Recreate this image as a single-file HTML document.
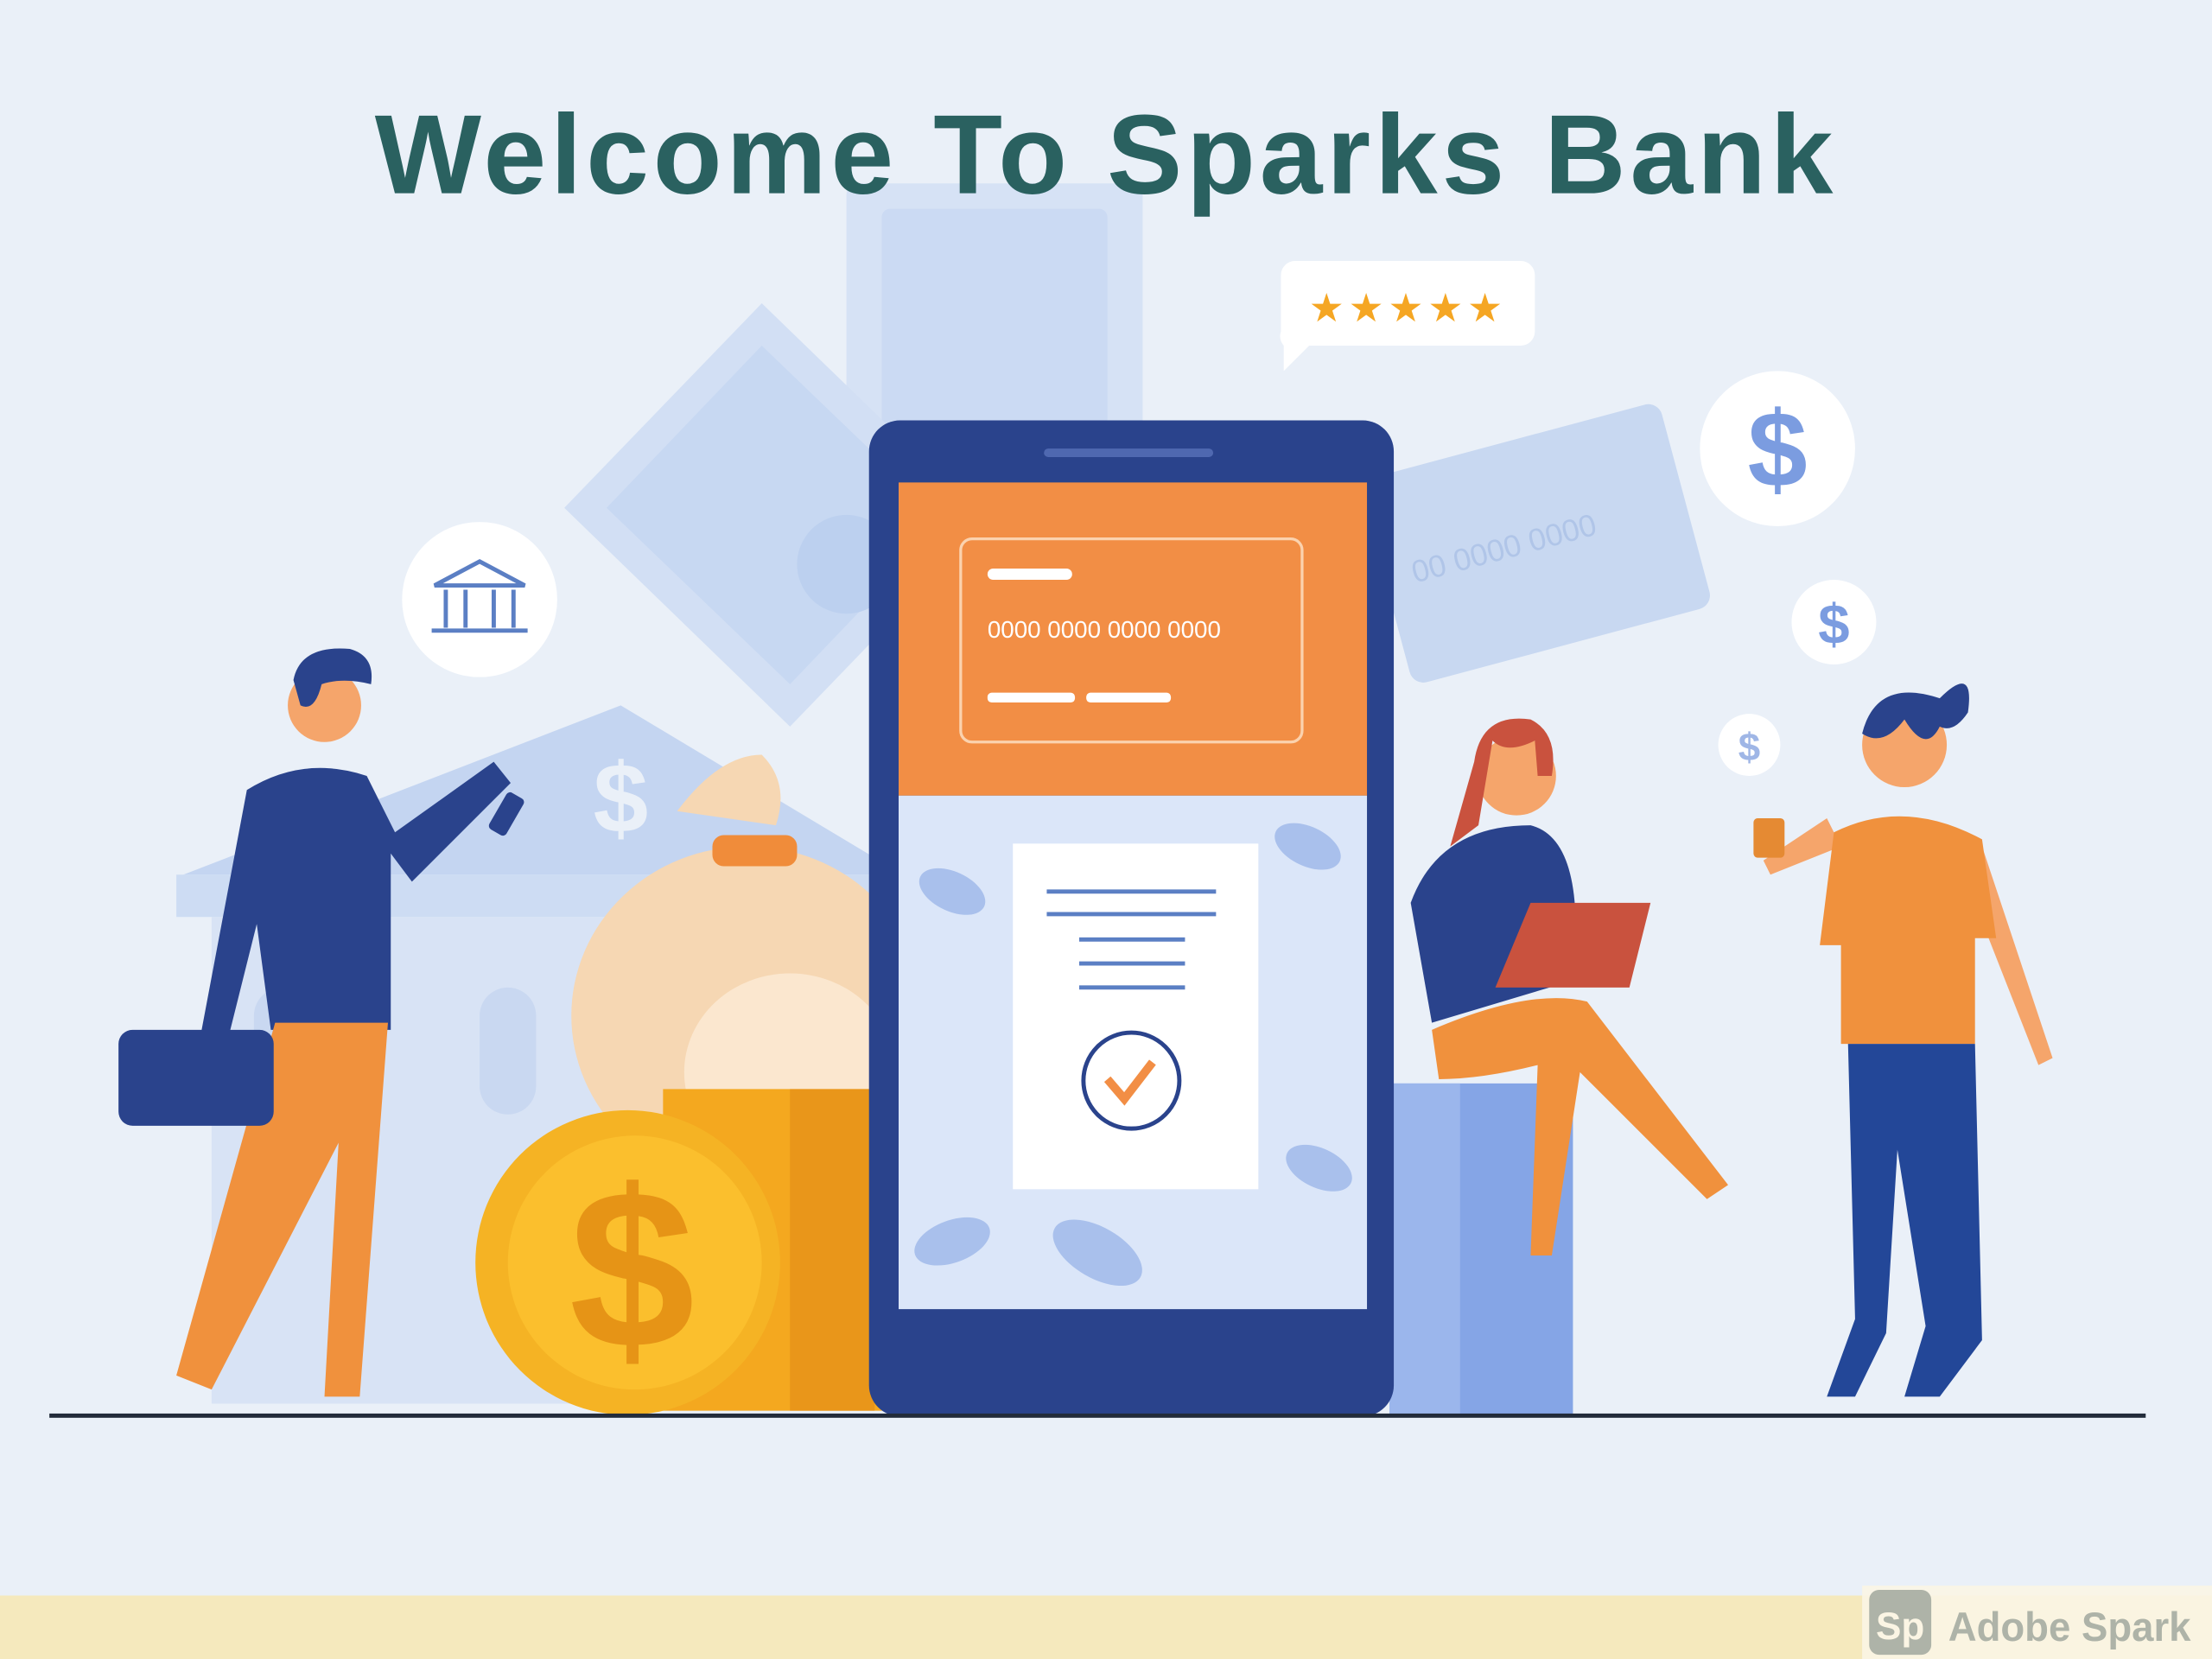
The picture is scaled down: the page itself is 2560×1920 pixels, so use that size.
<!DOCTYPE html>
<html><head><meta charset="utf-8"><style>
html,body{margin:0;padding:0;width:2560px;height:1920px;overflow:hidden;background:#eaf0f8}
svg{display:block}
</style></head><body>
<svg width="2560" height="1920" viewBox="0 0 1568 1176" xmlns="http://www.w3.org/2000/svg">
<rect width="1568" height="1176" fill="#eaf0f8"/>
<rect x="600" y="130" width="210" height="200" rx="8" fill="#d6e2f5"/>
<rect x="625" y="148" width="160" height="170" rx="6" fill="#cbdaf3"/>
<polygon points="400,360 540,215 700,370 560,515" fill="#d2dff4"/>
<polygon points="430,360 540,245 670,370 560,485" fill="#c7d8f2"/>
<circle cx="600" cy="400" r="35" fill="#bcd0ef"/>
<g transform="rotate(-15 1090 390)"><rect x="980" y="310" width="220" height="150" rx="10" fill="#c8d8f1"/><text x="1000" y="390" font-family="Liberation Sans" font-size="22" fill="#b0c5e8">00 0000 0000</text></g>
<polygon points="130,620 440,500 640,620" fill="#c4d5f1"/>
<rect x="125" y="620" width="500" height="30" fill="#cddcf3"/>
<rect x="150" y="650" width="460" height="345" fill="#d8e3f5"/>
<rect x="180" y="700" width="40" height="90" rx="20" fill="#c9d8f1"/>
<rect x="340" y="700" width="40" height="90" rx="20" fill="#c9d8f1"/>
<text x="440" y="590" font-family="Liberation Sans" font-weight="bold" font-size="70" fill="#eaf0f8" text-anchor="middle">$</text>
<circle cx="340" cy="425" r="55" fill="#fff"/>
<g stroke="#5b7fc4" stroke-width="3" fill="none"><polygon points="308,415 340,398 372,415"/><line x1="316" y1="418" x2="316" y2="445"/><line x1="330" y1="418" x2="330" y2="445"/><line x1="350" y1="418" x2="350" y2="445"/><line x1="364" y1="418" x2="364" y2="445"/><line x1="306" y1="447" x2="374" y2="447"/></g>
<path d="M918,185 h160 a10,10 0 0 1 10,10 v40 a10,10 0 0 1 -10,10 h-150 l-18,18 v-18 a10,10 0 0 1 -2,-10 v-40 a10,10 0 0 1 10,-10z" fill="#fff"/>
<text x="998" y="228" font-family="DejaVu Sans" font-size="28" fill="#f5a623" text-anchor="middle" letter-spacing="3">★★★★★</text>
<circle cx="1260" cy="318" r="55" fill="#fff"/>
<text x="1260" y="345" font-family="Liberation Sans" font-weight="bold" font-size="76" fill="#7b9ce0" text-anchor="middle">$</text>
<circle cx="1300" cy="441" r="30" fill="#fff"/>
<text x="1300" y="456" font-family="Liberation Sans" font-weight="bold" font-size="40" fill="#7b9ce0" text-anchor="middle">$</text>
<circle cx="1240" cy="528" r="22" fill="#fff"/>
<text x="1240" y="539" font-family="Liberation Sans" font-weight="bold" font-size="28" fill="#9fb6e6" text-anchor="middle">$</text>
<ellipse cx="530" cy="720" rx="125" ry="120" fill="#f6d7b3"/>
<path d="M480,575 q30,-40 60,-40 q20,20 10,50 z" fill="#f6d7b3"/>
<rect x="505" y="592" width="60" height="22" rx="8" fill="#f08c3a"/>
<ellipse cx="560" cy="760" rx="75" ry="70" fill="#fbe7cf"/>
<rect x="470" y="772" width="160" height="228" fill="#f4a81f"/>
<rect x="560" y="772" width="60" height="228" fill="#e9961a"/>
<circle cx="445" cy="895" r="108" fill="#f5b324"/>
<circle cx="450" cy="895" r="90" fill="#fbbf2d"/>
<text x="448" y="955" font-family="Liberation Sans" font-weight="bold" font-size="160" fill="#e69416" text-anchor="middle">$</text>
<rect x="985" y="768" width="130" height="235" fill="#85a5e6"/>
<rect x="985" y="768" width="50" height="235" fill="#9bb6ec"/>
<rect x="616" y="298" width="372" height="706" rx="22" fill="#2a438c"/>
<rect x="740" y="318" width="120" height="6" rx="3" fill="#4f68b0"/>
<rect x="637" y="342" width="332" height="222" fill="#f28e45"/>
<rect x="637" y="564" width="332" height="364" fill="#dbe6f9"/>
<rect x="681" y="382" width="242" height="144" rx="8" fill="none" stroke="#fbd2ae" stroke-width="2"/>
<rect x="700" y="403" width="60" height="8" rx="4" fill="#fff"/>
<text x="700" y="452" font-family="Liberation Sans" font-size="17" fill="#fff">0000 0000 0000 0000</text>
<rect x="700" y="491" width="62" height="7" rx="3" fill="#fff"/>
<rect x="770" y="491" width="60" height="7" rx="3" fill="#fff"/>
<rect x="718" y="598" width="174" height="245" fill="#fff"/>
<g stroke="#5b7fc4" stroke-width="3"><line x1="742" y1="632" x2="862" y2="632"/><line x1="742" y1="648" x2="862" y2="648"/><line x1="765" y1="666" x2="840" y2="666"/><line x1="765" y1="683" x2="840" y2="683"/><line x1="765" y1="700" x2="840" y2="700"/></g>
<circle cx="802" cy="766" r="34" fill="none" stroke="#2a438c" stroke-width="3"/>
<path d="M785,765 l12,14 l20,-26" stroke="#f28e45" stroke-width="6" fill="none"/>
<g fill="#a9c0ec"><ellipse cx="675" cy="632" rx="25" ry="14" transform="rotate(25 675 632)"/><ellipse cx="927" cy="600" rx="25" ry="14" transform="rotate(25 927 600)"/><ellipse cx="935" cy="828" rx="25" ry="14" transform="rotate(25 935 828)"/><ellipse cx="675" cy="880" rx="28" ry="15" transform="rotate(-20 675 880)"/><ellipse cx="778" cy="888" rx="35" ry="18" transform="rotate(30 778 888)"/></g>
<circle cx="230" cy="500" r="26" fill="#f5a56b"/>
<path d="M208,482 q5,-25 40,-22 q18,5 15,25 q-20,-5 -35,0 q-5,20 -15,15z" fill="#2a438c"/>
<path d="M175,560 q40,-25 85,-10 l20,40 l70,-50 l12,15 l-70,70 l-15,-20 l0,125 l-85,0 l-10,-75 l-20,80 l-20,0 z" fill="#2a438c"/>
<path d="M195,725 l80,0 l-20,265 l-25,0 l10,-180 l-90,175 l-25,-10 z" fill="#f0913d"/>
<rect x="84" y="730" width="110" height="68" rx="10" fill="#2a438c"/>
<rect x="352" y="562" width="14" height="30" rx="3" transform="rotate(30 359 577)" fill="#2a438c"/>
<circle cx="1075" cy="550" r="28" fill="#f5a56b"/>
<path d="M1045,540 q5,-35 40,-30 q20,10 15,40 l-10,0 l-2,-25 q-20,10 -30,0 l-10,60 l-20,15z" fill="#c9523e"/>
<path d="M1000,640 q20,-55 85,-55 q40,10 30,110 l-100,30z" fill="#2a438c"/>
<path d="M1015,730 q70,-30 110,-20 l100,130 l-15,10 l-90,-90 l-20,130 l-15,0 l5,-135 q-40,10 -70,10z" fill="#f0913d"/>
<polygon points="1060,700 1085,640 1170,640 1155,700" fill="#c9523e"/>
<circle cx="1350" cy="528" r="30" fill="#f5a56b"/>
<path d="M1320,520 q10,-40 55,-25 q25,-25 20,10 q-10,15 -20,10 q-10,20 -25,-5 q-15,20 -30,10z" fill="#2a438c"/>
<path d="M1305,600 l-50,20 l-5,-10 l45,-30z" fill="#f5a56b"/>
<path d="M1405,600 l50,150 l-10,5 l-55,-140z" fill="#f5a56b"/>
<rect x="1243" y="580" width="22" height="28" rx="3" fill="#e58a33"/>
<path d="M1300,590 q50,-25 105,5 l10,70 l-15,0 l0,75 l-95,0 l0,-70 l-15,0z" fill="#f0913d"/>
<path d="M1310,740 l90,0 l5,210 l-30,40 l-25,0 l15,-50 l-20,-125 l-8,130 l-22,45 l-20,0 l20,-55z" fill="#234798"/>
<rect x="35" y="1002" width="1486" height="3" fill="#222b3a"/>
<text x="784" y="137" font-family="Liberation Sans" font-weight="bold" font-size="80" fill="#2a6160" text-anchor="middle" letter-spacing="3">Welcome To Sparks Bank</text>
<rect x="0" y="1131" width="1568" height="45" fill="#f5e9bd"/>
<rect x="1320" y="1124" width="248" height="52" fill="#fbf5e4" opacity="0.9"/>
<rect x="1325" y="1127" width="44" height="46" rx="7" fill="#aeb3a8"/>
<text x="1347" y="1162" font-family="Liberation Sans" font-weight="bold" font-size="27" fill="#fbf5e4" text-anchor="middle">Sp</text>
<text x="1381" y="1163" font-family="Liberation Sans" font-weight="bold" font-size="29" fill="#aeb3a8" textLength="172" lengthAdjust="spacingAndGlyphs">Adobe Spark</text>
</svg>
</body></html>
